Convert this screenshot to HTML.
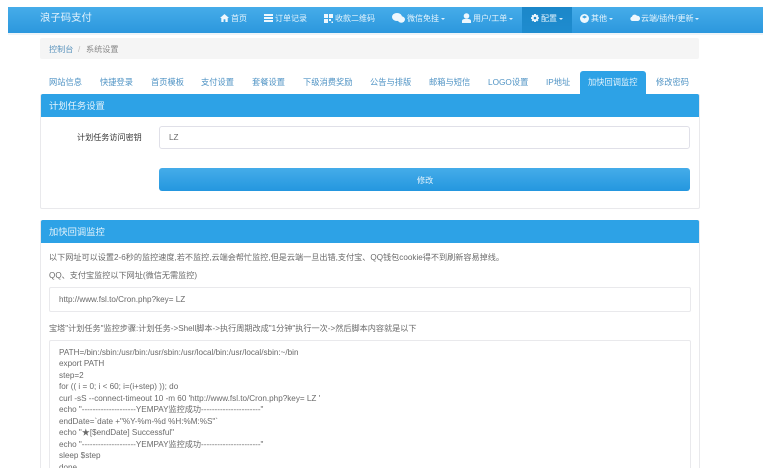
<!DOCTYPE html>
<html lang="zh"><head><meta charset="utf-8"><title>系统设置</title>
<style>
html,body{margin:0;padding:0;background:#fff;width:763px;height:468px;overflow:hidden}
#w{position:relative;width:763px;height:468px;overflow:hidden;filter:blur(.35px);font-family:"Liberation Sans","Noto Sans CJK SC",sans-serif;color:#6a6a6a}
.a{position:absolute;white-space:nowrap}
.t{line-height:12px;font-size:8.15px}
.n{color:#e6f4fc;font-size:8px;line-height:12px;top:13px}
.c{display:inline-block;border-top:2px solid #dff0fb;border-left:2px solid transparent;border-right:2px solid transparent;vertical-align:middle;margin-left:2px}
.tab{top:77px;color:#4f93c4;font-size:8.25px;line-height:12px}
svg{position:absolute;fill:#eef7fd}
.head{background:#2da2e6;color:#e6f4fc;font-size:9.3px;left:41px;width:658px}
.box{border:1px solid #e9e9ec;box-sizing:border-box;border-radius:2px}
</style></head><body><div id="w">
<div class="a" style="left:8px;top:7px;width:755px;height:26px;background:linear-gradient(#45ace9,#2b97dd)"></div>
<div class="a" style="left:8px;top:33px;width:755px;height:2px;background:#eef4f8"></div>
<div class="a" style="left:522px;top:7px;width:50px;height:26px;background:linear-gradient(#1b87c9,#1f8ccf)"></div>
<div class="a" style="left:40px;top:11px;font-size:10.4px;line-height:16px;color:#e3f2fc">浪子码支付</div>

<svg style="left:220px;top:14px" width="9" height="8" viewBox="0 0 9 8"><path d="M4.500 0L9 4H7.700V8H5.400V5.200H3.600V8H1.300V4H0z"/></svg>
<div class="a n" style="left:231px">首页</div>
<svg style="left:264px;top:14px" width="9" height="8" viewBox="0 0 9 8"><path d="M0 0H9V2H0zM0 3H9V5H0zM0 6H9V8H0z"/></svg>
<div class="a n" style="left:275px">订单记录</div>
<svg style="left:324px;top:14px" width="9" height="9" viewBox="0 0 9 9"><path d="M0 0H4V4H0zM5 0H9V4H5zM0 5H4V9H0zM5 5H7V7H5zM7.500 7.500H9V9H7.500z"/></svg>
<div class="a n" style="left:335px">收款二维码</div>
<svg style="left:392px;top:13px" width="13" height="10" viewBox="0 0 13 10"><ellipse cx="5" cy="4" rx="5" ry="4"/><ellipse cx="9.300" cy="6.500" rx="3.700" ry="3.200"/></svg>
<div class="a n" style="left:407px">微信免挂<i class="c"></i></div>
<svg style="left:462px;top:13px" width="9" height="10" viewBox="0 0 9 10"><circle cx="4.500" cy="3" r="2.800"/><path d="M0 10V8Q0 6.300 2.500 6H6.500Q9 6.300 9 8V10z"/></svg>
<div class="a n" style="left:473px">用户/工单<i class="c"></i></div>
<svg style="left:531px;top:14px" width="8" height="8" viewBox="0 0 8 8"><path fill-rule="evenodd" d="M3 0H5L5.300 1.200 6.500 .7 7.400 2 6.600 3 8 3.400V4.800L6.700 5 7.400 6.300 6.300 7.400 5.200 6.600 5 8H3L2.800 6.700 1.600 7.400 .6 6.300 1.300 5.200 0 4.800V3.300L1.300 3 .6 1.800 1.700 .7 2.800 1.400ZM4 2.700A1.300 1.300 0 1 0 4 5.300 1.300 1.300 0 1 0 4 2.700Z"/></svg>
<div class="a n" style="left:541px">配置<i class="c"></i></div>
<svg style="left:580px;top:14px" width="9" height="9" viewBox="0 0 9 9"><circle cx="4.500" cy="4.500" r="4.500"/><path d="M4.500 1.500L7 3 4.500 4.500 2 3z" fill="#3ba3e3"/></svg>
<div class="a n" style="left:591px">其他<i class="c"></i></div>
<svg style="left:630px;top:14px" width="10" height="7" viewBox="0 0 10 7"><path d="M2.200 7A2.200 2.200 0 0 1 2 2.700 2.800 2.800 0 0 1 7 1.800 2.600 2.600 0 0 1 7.800 7z"/></svg>
<div class="a n" style="left:641px">云端/插件/更新<i class="c"></i></div>

<div class="a" style="left:40px;top:38px;width:659px;height:21px;background:#f5f5f5;border-radius:2px"></div>
<div class="a t" style="left:49px;top:44px;color:#5b94bd">控制台</div>
<div class="a t" style="left:78px;top:44px;color:#bbb">/</div>
<div class="a t" style="left:86px;top:44px;color:#888">系统设置</div>

<div class="a tab" style="left:49px">网站信息</div>
<div class="a tab" style="left:100px">快捷登录</div>
<div class="a tab" style="left:151px">首页模板</div>
<div class="a tab" style="left:201px">支付设置</div>
<div class="a tab" style="left:252px">套餐设置</div>
<div class="a tab" style="left:303px">下级消费奖励</div>
<div class="a tab" style="left:370px">公告与排版</div>
<div class="a tab" style="left:429px">邮箱与短信</div>
<div class="a tab" style="left:488px">LOGO设置</div>
<div class="a tab" style="left:546px">IP地址</div>
<div class="a" style="left:580px;top:71px;width:66px;height:23px;background:#2da2e6;border-radius:3px 3px 0 0"></div>
<div class="a tab" style="left:588px;color:#e6f4fc">加快回调监控</div>
<div class="a tab" style="left:656px">修改密码</div>

<div class="a box" style="left:40px;top:94px;width:660px;height:115px"></div>
<div class="a head" style="top:94px;height:23px;text-indent:8px;line-height:25px;border-radius:2px 2px 0 0">计划任务设置</div>
<div class="a t" style="left:77px;top:132px;color:#333;font-size:8.100px">计划任务访问密钥</div>
<div class="a box" style="left:159px;top:126px;width:531px;height:23px;border-color:#e0e0e8;border-radius:3px"></div>
<div class="a t" style="left:169px;top:132px">LZ</div>
<div class="a" style="left:159px;top:168px;width:531px;height:23px;border-radius:3px;background:linear-gradient(#45ace9,#2497df)"></div>
<div class="a t" style="left:417px;top:175px;color:#e6f4fc">修改</div>

<div class="a box" style="left:40px;top:220px;width:660px;height:260px"></div>
<div class="a head" style="top:220px;height:23px;text-indent:8px;line-height:25px;border-radius:2px 2px 0 0">加快回调监控</div>
<div class="a t" style="left:49px;top:252px">以下网址可以设置2-6秒的监控速度,若不监控,云端会帮忙监控,但是云端一旦出错,支付宝、QQ钱包cookie得不到刷新容易掉线。</div>
<div class="a t" style="left:49px;top:270px">QQ、支付宝监控以下网址(微信无需监控)</div>
<div class="a box" style="left:49px;top:287px;width:642px;height:25px"></div>
<div class="a t" style="left:59px;top:294px">http://www.fsl.to/Cron.php?key= LZ</div>
<div class="a t" style="left:49px;top:323px">宝塔"计划任务"监控步骤:计划任务-&gt;Shell脚本-&gt;执行周期改成"1分钟"执行一次-&gt;然后脚本内容就是以下</div>
<div class="a box" style="left:49px;top:340px;width:642px;height:140px"></div>
<div class="a t" style="left:59px;top:346.500px;line-height:11.500px;white-space:pre">PATH=/bin:/sbin:/usr/bin:/usr/sbin:/usr/local/bin:/usr/local/sbin:~/bin
export PATH
step=2
for (( i = 0; i &lt; 60; i=(i+step) )); do
curl -sS --connect-timeout 10 -m 60 'http://www.fsl.to/Cron.php?key= LZ '
echo "--------------------YEMPAY监控成功----------------------"
endDate=`date +"%Y-%m-%d %H:%M:%S"`
echo "★[$endDate] Successful"
echo "--------------------YEMPAY监控成功----------------------"
sleep $step
done</div>
</div></body></html>
